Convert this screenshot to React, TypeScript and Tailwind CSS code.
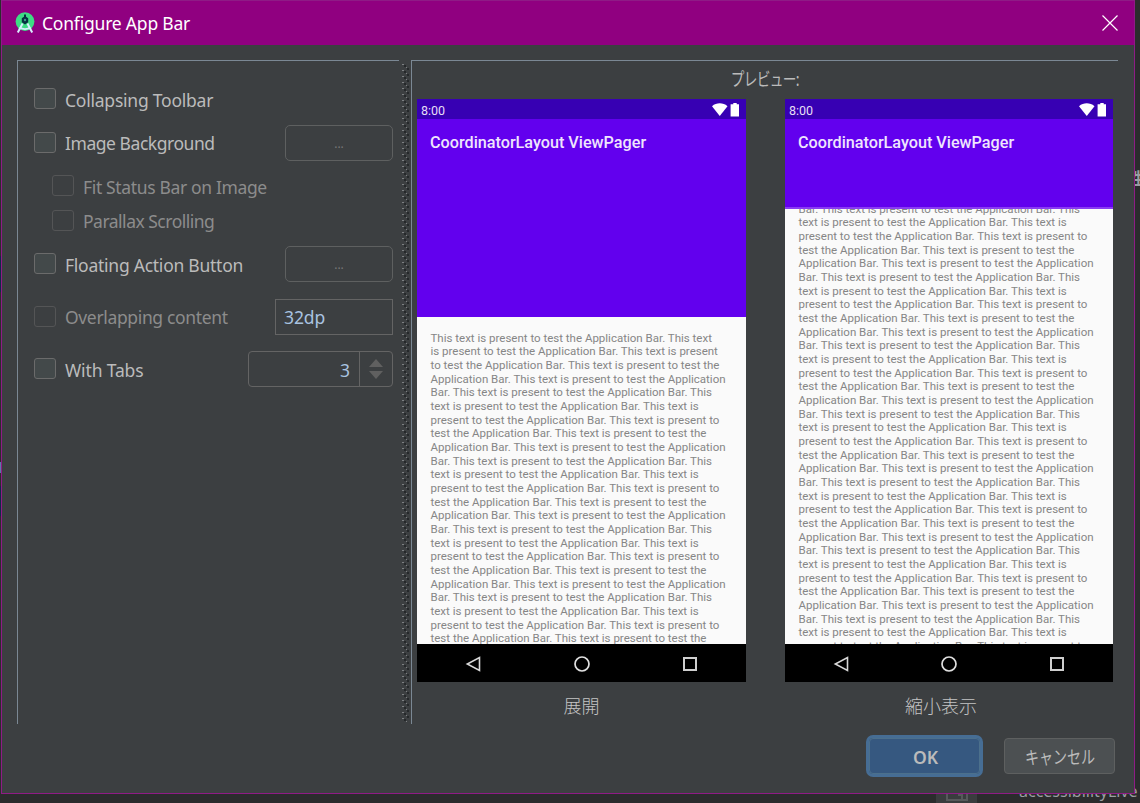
import type { ReactNode } from "react";

const CYCLE = [
  "Application Bar. This text is present to test the Application",
  "Bar. This text is present to test the Application Bar. This",
  "text is present to test the Application Bar. This text is",
  "present to test the Application Bar. This text is present to",
  "test the Application Bar. This text is present to test the",
];

const INTRO = [
  "This text is present to test the Application Bar. This text",
  "is present to test the Application Bar. This text is present",
  "to test the Application Bar. This text is present to test the",
];

function cycleLines(start: number, count: number) {
  return Array.from({ length: count }, (_, i) => CYCLE[(start + i) % CYCLE.length]);
}

const EXPANDED_LINES = [...INTRO, ...cycleLines(0, 20)];
const COLLAPSED_LINES = cycleLines(1, 33);

function StudioLogo() {
  return (
    <svg width="20" height="22" viewBox="0 0 20 22" className="shrink-0">
      <circle cx="10" cy="9.600" r="9.400" fill="#3ddc84" />
      <path d="M10 2.500v3" stroke="#073042" strokeWidth="2" />
      <path d="M6.800 6.200 10 4l3.200 2.200v4L10 12.600l-3.200-2.400z" fill="#073042" />
      <circle cx="10" cy="8" r="1.2" fill="#3f9f8a" />
      <path d="M7.600 11.500 2.800 20.500M12.400 11.500 17.200 20.500" stroke="#d7effe" strokeWidth="2" fill="none" />
      <path d="M4.600 15.600c3 2 7.800 2 10.800 0" stroke="#d7effe" strokeWidth="1.8" fill="none" />
    </svg>
  );
}

function Splitter() {
  return (
    <svg width="8" height="658" className="mt-[4px] ml-[3px] shrink-0" shapeRendering="crispEdges">
      <defs>
        <pattern id="grip" width="8" height="6" patternUnits="userSpaceOnUse">
          <path d="M0 0h2v1h-2z" fill="#7d8082" />
          <path d="M2 1h2v2h-2z" fill="#25282a" />
          <path d="M4 3h1v1h-1z" fill="#7d8082" />
          <path d="M5 4h2v2h-2z" fill="#25282a" />
        </pattern>
      </defs>
      <rect width="8" height="658" fill="url(#grip)" />
    </svg>
  );
}

function OptionRow({
  label,
  disabled,
  className,
  labelClass = "mt-[3px] tracking-[-0.35px]",
  children,
}: {
  label: string;
  disabled?: boolean;
  className: string;
  labelClass?: string;
  children?: ReactNode;
}) {
  return (
    <div className={`flex h-9 items-center ${className}`}>
      <span
        className={`-mt-px h-[21px] w-[22px] shrink-0 rounded-[3px] border ${
          disabled ? "border-[#545556]" : "border-[#6b6b6b] bg-[#43494a]"
        }`}
      />
      <span
        className={`ml-[9px] flex-1 text-[17.5px] whitespace-nowrap ${labelClass} ${
          disabled ? "text-[#8c8c8c]" : "text-[#bbbbbb]"
        }`}
      >
        {label}
      </span>
      {children}
    </div>
  );
}

function MoreButton() {
  return (
    <button className="h-9 w-[108px] rounded-[5px] border border-[#5e6060] pt-[2px] text-[12px] text-[#777777]">
      ...
    </button>
  );
}

function Phone({
  width,
  barHeight,
  collapsed,
  lines,
}: {
  width: string;
  barHeight: string;
  collapsed?: boolean;
  lines: string[];
}) {
  return (
    <div className={`flex h-[583px] flex-col overflow-hidden bg-[#fafafa] font-[Roboto] ${width}`}>
      <div className="flex h-5 shrink-0 items-center justify-between bg-[#3700b3] pr-[6px] pl-[4px]">
        <span className="mt-[5px] text-[12.5px] leading-none text-[#e6dff6]">8:00</span>
        <svg width="28" height="14" viewBox="0 0 28 14" fill="#ffffff" className="mt-px">
          <path d="M0 3.200C4.500-.6 11-.6 15.500 3.200L7.750 13z" />
          <path d="M21.300 0h3.400v1.200h2.300v12.300h-8.400v-12.300h2.700z" />
        </svg>
      </div>
      <div
        className={`shrink-0 bg-[#6200ee] pt-[14px] pl-[13px] text-[16.2px] leading-5 font-medium whitespace-nowrap text-[#efe5fd] ${barHeight} ${
          collapsed ? "border-b-2 border-[#8a3df2]" : ""
        }`}
      >
        CoordinatorLayout ViewPager
      </div>
      <div className="min-h-0 flex-1 overflow-hidden pl-[13.5px]">
        <div
          className={`text-[11.5px] leading-[13.67px] whitespace-nowrap text-[#868686] ${
            collapsed ? "-mt-[6.4px]" : "mt-[14.6px]"
          }`}
        >
          {lines.map((line, i) => (
            <div key={i}>{line}</div>
          ))}
        </div>
      </div>
      <div className="flex h-[38px] shrink-0 items-center justify-between bg-black pt-px pr-[48px] pl-[48px]">
        <svg width="16" height="16" viewBox="0 0 16 16" fill="none" stroke="#d8d8d8" strokeWidth="1.600">
          <path d="M14.500 1.500v13L2.300 8z" />
        </svg>
        <svg width="16" height="16" viewBox="0 0 16 16" fill="none" stroke="#e0e0e0" strokeWidth="1.700">
          <circle cx="8" cy="8" r="7" />
        </svg>
        <svg width="16" height="16" viewBox="0 0 16 16" fill="none" stroke="#cfcfcf" strokeWidth="2">
          <path d="M2 2h12v12h-12z" />
        </svg>
      </div>
    </div>
  );
}

export default function App() {
  return (
    <div className="relative h-[803px] w-[1140px] overflow-hidden bg-[#2b2c2d] font-['Noto_Sans','Noto_Sans_CJK_JP',sans-serif]">
      {/* Editor window showing past the dialog edges */}
      <div className="absolute top-[794px] left-[936px] flex h-[9px] w-[41px] justify-center bg-[#3a3c3e]">
        <svg width="22" height="9" viewBox="0 0 22 9" fill="none" stroke="#57595b" strokeWidth="2">
          <path d="M1 0v6h20V0M12 1h4v4" />
        </svg>
      </div>
      <div className="absolute top-[780px] left-[1019px] h-[22px] text-[16px] leading-[22px] whitespace-nowrap text-[#9a9ea2]">
        accessibilityLive
      </div>
      <div className="absolute top-[168px] left-[1127px] text-[17px] leading-[22px] font-bold text-[#9a9ea2]">性</div>
      <div className="absolute top-[462px] left-0 h-[11px] w-px bg-[#5b7da8]" />
      <div className="absolute top-[256px] left-0 h-[36px] w-px bg-[#0f2a45]" />
      <div className="absolute top-[486px] left-0 h-[30px] w-px bg-[#0f2a45]" />

      <div className="relative ml-px flex h-[794px] w-[1134px] flex-col border border-[#8f1b86] bg-[#3c3f41]">
        <header className="flex h-[44px] shrink-0 items-center bg-[#900080] pl-[13px]">
          <StudioLogo />
          <h1 className="ml-[7px] flex-1 text-[17.5px] tracking-[-0.2px] text-white">Configure App Bar</h1>
          <svg width="16" height="16" viewBox="0 0 16 16" stroke="#ffffff" strokeWidth="1.200" className="mr-[16.5px]">
            <path d="M.5.5l15 15M15.500.5l-15 15" />
          </svg>
        </header>

        <div className="flex h-[679px] shrink-0 pt-[15px] pl-[15px]">
          <section className="h-[664px] w-[382px] border-t border-l border-[#7b8894] pr-[6px] pl-4">
            <OptionRow
              label="Collapsing Toolbar"
              className="mt-[20px]"
              labelClass="mt-[3px] tracking-[-0.23px]"
            />
            <OptionRow
              label="Image Background"
              className="mt-[8px]"
              labelClass="mt-px tracking-[-0.45px]"
            >
              <MoreButton />
            </OptionRow>
            <OptionRow label="Fit Status Bar on Image" disabled className="mt-[7px] pl-[18px]" />
            <OptionRow
              label="Parallax Scrolling"
              disabled
              className="-mt-px pl-[18px]"
              labelClass="mt-px tracking-[-0.5px]"
            />
            <OptionRow
              label="Floating Action Button"
              className="mt-[7px]"
              labelClass="mt-[3px] tracking-[-0.25px]"
            >
              <MoreButton />
            </OptionRow>
            <OptionRow label="Overlapping content" disabled className="mt-[17px]" labelClass="mt-px tracking-[-0.35px]">
              <div className="flex h-9 w-[118px] items-center border border-[#646464] pt-px pl-2 text-[17.5px] tracking-[-0.1px] text-[#a9c3e0]">
                32dp
              </div>
            </OptionRow>
            <OptionRow label="With Tabs" className="mt-[16px]" labelClass="mt-[3px] tracking-[-0.15px]">
              <div className="flex h-9 w-[145px] rounded-[4px] border border-[#646464] text-[17.5px]">
                <span className="flex flex-1 items-center justify-end border-r border-[#646464] pt-[2px] pr-[9px] text-[#a9c3e0]">
                  3
                </span>
                <span className="flex w-8 items-center justify-center">
                  <svg width="14" height="20" viewBox="0 0 14 20" fill="#606060">
                    <path d="M0 8 7 0l7 8zM0 12h14l-7 8z" />
                  </svg>
                </span>
              </div>
            </OptionRow>
          </section>

          <Splitter />

          <section className="ml-px h-[664px] w-[707px] border-t border-l border-[#7b8894]">
            <p className="h-[38px] pt-[4px] text-center text-[18px] leading-[26px] text-[#bbbbbb]">
              <span className="inline-block scale-x-[0.76] font-['Noto_Sans_CJK_JP'] tracking-[-0.9px]">
                プレビュー:
              </span>
            </p>
            <div className="flex gap-[39px] pl-[5px]">
              <div className="flex flex-col items-center">
                <Phone width="w-[329px]" barHeight="h-[198px]" lines={EXPANDED_LINES} />
                <p className="mt-[10px] font-['Noto_Sans_CJK_JP'] text-[18px] leading-[26px] font-light text-[#c4c4c4]">
                  展開
                </p>
              </div>
              <div className="flex flex-col items-center">
                <Phone width="w-[328px]" barHeight="h-[90px]" collapsed lines={COLLAPSED_LINES} />
                <p className="mt-[10px] pr-4 font-['Noto_Sans_CJK_JP'] text-[18px] leading-[26px] font-light text-[#c4c4c4]">
                  縮小表示
                </p>
              </div>
            </div>
          </section>
        </div>

        <footer className="flex justify-end pt-[11px] pr-[19px]">
          <button className="h-[42px] w-[117px] rounded-[7px] border-[3px] border-[#466d94] bg-[#365880]">
            <span className="flex h-full w-full items-center justify-center rounded-[4px] border border-[#4c708c] pt-[3px] pl-[2px] text-[17.5px] font-semibold text-[#bbbbbb]">
              OK
            </span>
          </button>
          <button className="mt-[3px] ml-[21px] h-9 w-[111px] rounded-[4px] border border-[#5e6060] bg-[#4c5052] font-['Noto_Sans_CJK_JP'] text-[18px] leading-[34px] text-[#bbbbbb]">
            <span className="inline-block scale-x-[0.78]">キャンセル</span>
          </button>
        </footer>
      </div>
    </div>
  );
}
